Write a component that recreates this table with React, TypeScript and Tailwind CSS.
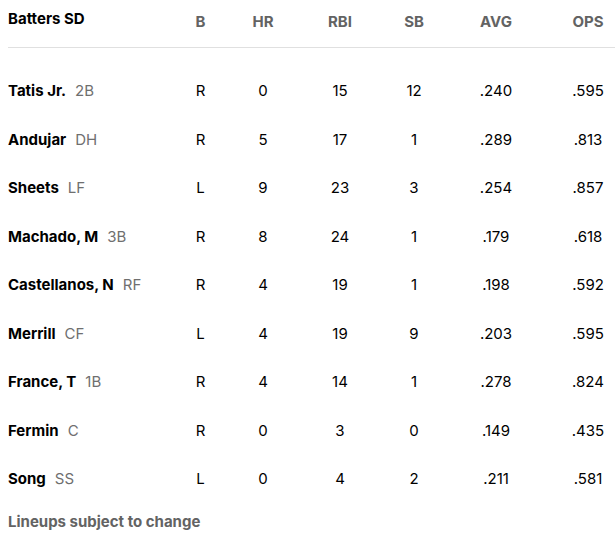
import React from "react";

const rows = [
  ["Tatis Jr.", "2B", "R", "0", "15", "12", ".240", ".595"],
  ["Andujar", "DH", "R", "5", "17", "1", ".289", ".813"],
  ["Sheets", "LF", "L", "9", "23", "3", ".254", ".857"],
  ["Machado, M", "3B", "R", "8", "24", "1", ".179", ".618"],
  ["Castellanos, N", "RF", "R", "4", "19", "1", ".198", ".592"],
  ["Merrill", "CF", "L", "4", "19", "9", ".203", ".595"],
  ["France, T", "1B", "R", "4", "14", "1", ".278", ".824"],
  ["Fermin", "C", "R", "0", "3", "0", ".149", ".435"],
  ["Song", "SS", "L", "0", "4", "2", ".211", ".581"],
];

const grid = "grid grid-cols-[150px_85px_40px_114px_34px_130px_54px]";

export default function App() {
  return (
    <div className="w-[615px] h-[538px] bg-white pl-2 text-[15px] text-black" style={{ fontFamily: "Inter, 'Liberation Sans', sans-serif" }}>
      <div className={`${grid} h-[48px] items-center border-b border-[#e0e0e0]`}>
        <div className="font-bold -mt-[8px]">Batters SD</div>
        {["B", "HR", "RBI", "SB", "AVG", "OPS"].map((h) => (
          <div key={h} className="text-center font-bold text-[#636363] -mt-[3px]">{h}</div>
        ))}
      </div>
      <div className="pt-[19px]">
        {rows.map((r) => (
          <div key={r[0]} className={`${grid} h-[48.5px] items-center`}>
            <div className="whitespace-nowrap">
              <span className="font-bold">{r[0]}</span>
              <span className="ml-[9px] text-[#6f6f6f]">{r[1]}</span>
            </div>
            {r.slice(2).map((c, i) => (
              <div key={i} className="text-center">{c}</div>
            ))}
          </div>
        ))}
      </div>
      <div className="mt-[7px] font-bold text-[#636363]">Lineups subject to change</div>
    </div>
  );
}
